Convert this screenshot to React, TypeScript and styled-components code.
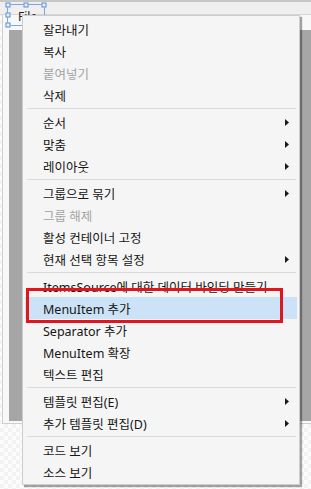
import styled, { createGlobalStyle } from "styled-components";

type Item = { label: string; disabled?: boolean; sub?: boolean; active?: boolean };

const groups: Item[][] = [
  [{ label: "잘라내기" }, { label: "복사" }, { label: "붙여넣기", disabled: true }, { label: "삭제" }],
  [
    { label: "순서", sub: true },
    { label: "맞춤", sub: true },
    { label: "레이아웃", sub: true },
  ],
  [
    { label: "그룹으로 묶기", sub: true },
    { label: "그룹 해제", disabled: true },
    { label: "활성 컨테이너 고정" },
    { label: "현재 선택 항목 설정", sub: true },
  ],
  [
    { label: "ItemsSource에 대한 데이터 바인딩 만들기" },
    { label: "MenuItem 추가", active: true },
    { label: "Separator 추가" },
    { label: "MenuItem 확장" },
    { label: "텍스트 편집" },
  ],
  [
    { label: "템플릿 편집(E)", sub: true },
    { label: "추가 템플릿 편집(D)", sub: true },
  ],
  [{ label: "코드 보기" }, { label: "소스 보기" }],
];

const GlobalStyle = createGlobalStyle`
  html, body {
    margin: 0;
    padding: 0;
  }
  body {
    width: 311px;
    height: 489px;
    overflow: hidden;
    font-family: "Noto Sans", "Noto Sans CJK KR", sans-serif;
  }
`;

const Page = styled.div`
  position: relative;
  width: 311px;
  height: 489px;
  display: flex;
  flex-direction: column;
  background: repeating-conic-gradient(#f3f3f3 0 25%, #fcfcfc 0 50%) 0 0 / 8px 8px;
`;

const TopBand = styled.div`
  height: 12px;
  border-top: 2px solid #c6c6c6;
  border-bottom: 1px solid #d6d6d6;
  background: #efefef;
`;

const Frame = styled.div`
  display: flex;
  flex-direction: column;
  margin-left: 2px;
  padding: 15px 0 2px 6px;
  border-left: 1px solid #cfcfcf;
  border-bottom: 1px solid #cfcfcf;
  background: #f8f8f8;
`;

const WindowBody = styled.div`
  height: 391px;
  background: #a6a6a6;
`;

/* designer adorner drawn over the selected "File" menu */
const Selection = styled.div`
  position: absolute;
  left: 7px;
  top: 4px;
  width: 38px;
  height: 22px;
  box-sizing: border-box;
  border: 1px solid #7aa7dc;
  padding: 3px 0 0 10px;
  font-size: 12px;
  color: #1e1e1e;
`;

const Handle = styled.span<{ $x: number; $y: number }>`
  position: absolute;
  width: 5px;
  height: 5px;
  box-sizing: border-box;
  border: 1px solid #5b8fd0;
  background: #e8f0fb;
  left: ${(p) => p.$x}%;
  top: ${(p) => p.$y}%;
  transform: translate(-50%, -50%);
`;

const Menu = styled.div`
  position: absolute;
  left: 22px;
  top: 15px;
  width: 278px;
  box-sizing: border-box;
  padding: 2px 0 1px;
  background: #f5f5f5;
  border: 1px solid #cdcdcd;
  box-shadow: 2px 2px 1px rgba(0, 0, 0, 0.35);
  font-family: "Noto Sans", "Noto Sans CJK KR", sans-serif;
  font-size: 12.5px;
`;

const Row = styled.div<{ $disabled?: boolean; $active?: boolean }>`
  display: flex;
  align-items: center;
  height: 22px;
  margin: 0 2px;
  padding: 0 8px 0 18px;
  color: ${(p) => (p.$disabled ? "#a3a3a3" : "#161616")};
  background: ${(p) => (p.$active ? "#cce2f6" : "transparent")};
  white-space: nowrap;
`;

const Label = styled.span`
  flex: 1;
`;

const Arrow = styled.svg`
  width: 4px;
  height: 7px;
  fill: #1b1b1b;
`;

const Separator = styled.div`
  height: 1px;
  margin: 2px 3px 2px 4px;
  background: #dadada;
`;

const Callout = styled.div`
  position: absolute;
  left: 26px;
  top: 288px;
  width: 257px;
  height: 35px;
  box-sizing: border-box;
  border: 3px solid #e2141c;
`;

export default function App() {
  return (
    <>
      <GlobalStyle />
      <Page>
        <TopBand />
        <Frame>
          <WindowBody />
        </Frame>
        <Selection>
          File
          <Handle $x={0} $y={0} />
          <Handle $x={50} $y={0} />
          <Handle $x={100} $y={0} />
          <Handle $x={0} $y={50} />
          <Handle $x={0} $y={100} />
        </Selection>
        <Menu>
          {groups.map((group, gi) => (
            <div key={gi}>
              {gi > 0 && <Separator />}
              {group.map((item) => (
                <Row key={item.label} $disabled={item.disabled} $active={item.active}>
                  <Label>{item.label}</Label>
                  {item.sub && (
                    <Arrow viewBox="0 0 4 7">
                      <polygon points="0,0 4,3.5 0,7" />
                    </Arrow>
                  )}
                </Row>
              ))}
            </div>
          ))}
        </Menu>
        <Callout />
      </Page>
    </>
  );
}
